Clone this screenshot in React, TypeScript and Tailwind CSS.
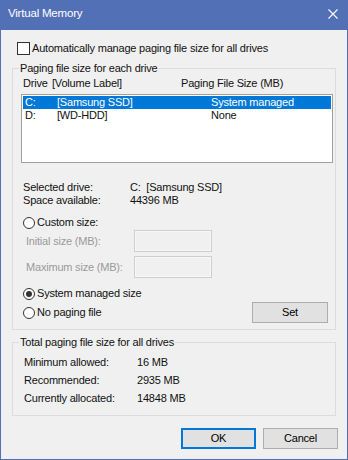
const Radio = ({ checked = false }: { checked?: boolean }) => (
  <span className="w-[12px] h-[12px] rounded-full border border-[#333333] bg-white flex items-center justify-center shrink-0">
    {checked && <span className="w-[6px] h-[6px] rounded-full bg-[#333333]" />}
  </span>
);

const Button = ({ label, primary = false, className = "" }: { label: string; primary?: boolean; className?: string }) => (
  <button
    className={`h-[21px] w-[75px] bg-[#e1e1e1] border leading-[19px] text-black ${
      primary ? "border-[#0078d7] shadow-[inset_0_0_0_1px_#0078d7]" : "border-[#adadad]"
    } ${className}`}
  >
    {label}
  </button>
);

const App = () => {
  const drives = [
    { letter: "C:", label: "[Samsung SSD]", size: "System managed", selected: true },
    { letter: "D:", label: "[WD-HDD]", size: "None", selected: false },
  ];

  const totals = [
    ["Minimum allowed:", "16 MB"],
    ["Recommended:", "2935 MB"],
    ["Currently allocated:", "14848 MB"],
  ];

  return (
    <div className="w-[348px] h-[460px] bg-[#f0f0f0] border-x border-b border-[#5270b6] flex flex-col text-[11px] tracking-[-0.2px] text-[#111111] font-['Liberation_Sans',Arial,sans-serif] overflow-hidden">
      {/* title bar */}
      <div className="h-[30px] bg-[#5270b6] flex items-center justify-between pl-[7px] pr-[9px] pb-[3px] shrink-0">
        <span className="text-white text-[11.5px]">Virtual Memory</span>
        <svg width="10" height="10" viewBox="0 0 10 10" className="text-white">
          <path d="M0.5 0.5 L9.5 9.5 M9.5 0.5 L0.5 9.5" stroke="currentColor" strokeWidth="1.1" fill="none" />
        </svg>
      </div>

      <div className="flex flex-col px-[11px]">
        <label className="flex items-center gap-[2px] mt-[11px] ml-[5px] h-[15px] leading-[15px]">
          <span className="w-[13px] h-[13px] border border-[#333333] bg-white" />
          <span>Automatically manage paging file size for all drives</span>
        </label>

        {/* paging file size for each drive */}
        <fieldset className="mt-[5px] border border-[#dcdcdc] pb-[6px]">
          <legend className="ml-[6px] px-[1px] leading-[15px]">Paging file size for each drive</legend>

          <div className="flex h-[15px] leading-[15px] pl-[10px]">
            <span className="w-[29px]">Drive</span>
            <span className="w-[129px]">[Volume Label]</span>
            <span>Paging File Size (MB)</span>
          </div>

          <div className="mt-[3px] ml-[8px] w-[312px] h-[69px] border border-[#a0a0a0] bg-white pt-[1px] px-[1px]">
            {drives.map((d) => (
              <div
                key={d.letter}
                className={`flex h-[13px] leading-[13px] pl-[2px] ${d.selected ? "bg-[#0078d7] text-white" : ""}`}
              >
                <span className="w-[32px]">{d.letter}</span>
                <span className="w-[154px]">{d.label}</span>
                <span>{d.size}</span>
              </div>
            ))}
          </div>

          <div className="mt-[18px] pl-[10px] flex flex-col">
            <div className="flex h-[13px] leading-[13px]">
              <span className="w-[107px]">Selected drive:</span>
              <span>C:&nbsp; [Samsung SSD]</span>
            </div>
            <div className="flex h-[13px] leading-[13px]">
              <span className="w-[107px]">Space available:</span>
              <span>44396 MB</span>
            </div>
          </div>

          <div className="mt-[8px] pl-[10px] flex items-center gap-[2px] h-[15px] leading-[15px]">
            <Radio />
            <span>Custom size:</span>
          </div>

          <div className="flex items-center h-[22px] pl-[13px] text-[#9a9a9a]">
            <span className="w-[108px]">Initial size (MB):</span>
            <span className="w-[78px] h-[22px] border border-[#cfcfcf] shadow-[inset_0_0_0_1px_#f7f7f7]" />
          </div>
          <div className="mt-[4px] flex items-center h-[22px] pl-[13px] text-[#9a9a9a]">
            <span className="w-[108px]">Maximum size (MB):</span>
            <span className="w-[78px] h-[22px] border border-[#cfcfcf] shadow-[inset_0_0_0_1px_#f7f7f7]" />
          </div>

          <div className="flex justify-between items-start">
            <div className="flex flex-col pl-[10px]">
              <div className="mt-[8px] flex items-center gap-[2px] h-[15px] leading-[15px]">
                <Radio checked />
                <span>System managed size</span>
              </div>
              <div className="mt-[4px] flex items-center gap-[2px] h-[15px] leading-[15px]">
                <Radio />
                <span>No paging file</span>
              </div>
            </div>
            <Button label="Set" className="mt-[24px] mr-[7px] w-[76px]" />
          </div>
        </fieldset>

        {/* totals */}
        <fieldset className="mt-[5px] border border-[#dcdcdc] pb-[8px]">
          <legend className="ml-[6px] px-[1px] leading-[15px]">Total paging file size for all drives</legend>
          <div className="mt-[3px] pl-[11px] flex flex-col">
            {totals.map(([k, v]) => (
              <div key={k} className="flex h-[18px] leading-[18px]">
                <span className="w-[113px]">{k}</span>
                <span>{v}</span>
              </div>
            ))}
          </div>
        </fieldset>

        <div className="mt-[12px] flex justify-end gap-[7px] mr-[-2px]">
          <Button label="OK" primary />
          <Button label="Cancel" />
        </div>
      </div>
    </div>
  );
};

export default App;
